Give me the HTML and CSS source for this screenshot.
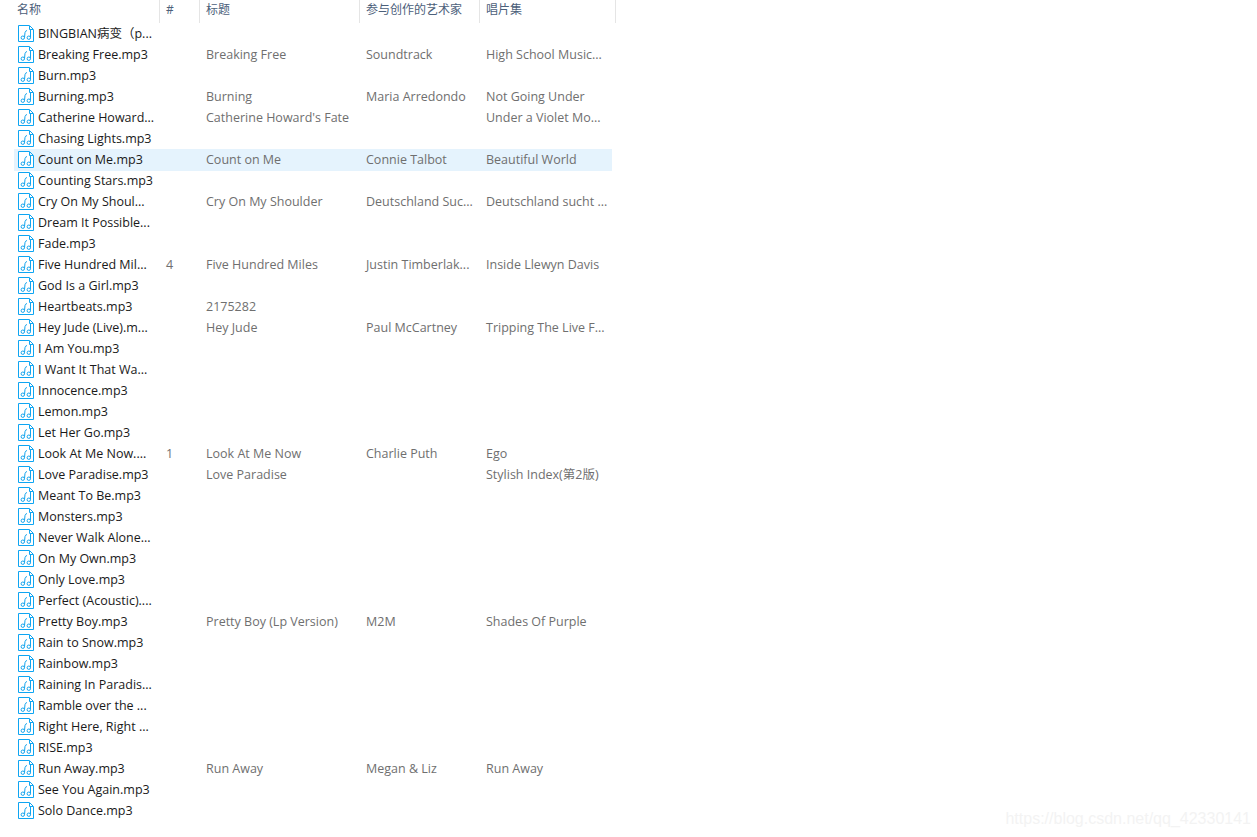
FILE: index.html
```html
<!DOCTYPE html>
<html>
  <head>
    <title>Music</title>
    <link rel="stylesheet" href="styles.css">
  </head>
  <body>
    <svg class="icon-defs" width="0" height="0">
      <symbol id="music-file" viewBox="0 0 17 17">
        <path d="M.5 .5H11.5L15.5 4.5V16.5H.5Z M11.5 1V4.5H15" fill="#fff" stroke="#0ea5f2"/>
        <path d="M6.5 12.5L7 7.5Q7.2 6 9 5.5M12.5 12.5V5" fill="none" stroke="#12a4ee"/>
        <circle cx="4.8" cy="12.7" r="1.7" fill="none" stroke="#12a4ee"/>
        <circle cx="10.8" cy="12.7" r="1.7" fill="none" stroke="#12a4ee"/>
      </symbol>
    </svg>
    <div class="list">
      <div class="head">
        <div class="th th-name">名称</div>
        <div class="th">#</div>
        <div class="th">标题</div>
        <div class="th">参与创作的艺术家</div>
        <div class="th">唱片集</div>
      </div>
      <div id="rows"></div>
    </div>
    <div class="mark">https://blog.csdn.net/qq_42330141</div>
    <script src="app.js"></script>
  </body>
</html>
```

FILE: styles.css
```css
html, body {
  margin: 0;
  padding: 0;
  height: 837px;
  overflow: hidden;
  background: #fff;
}
body {
  font-family: "Open Sans", "Noto Sans CJK SC", sans-serif;
  font-size: 12.5px;
  position: relative;
}
.icon-defs {
  position: absolute;
}
.list {
  width: 616px;
}
.head {
  display: grid;
  grid-template-columns: 160px 40px 160px 120px 136px;
  height: 23px;
}
.th {
  padding-left: 6px;
  font-size: 12px;
  line-height: 19px;
  color: #4c607a;
  border-right: 1px solid #e5e5e5;
  box-sizing: border-box;
}
.th-name {
  padding-left: 17px;
}
.row {
  display: grid;
  grid-template-columns: 147px 40px 160px 120px 131px;
  grid-template-rows: 21px;
  width: 598px;
  margin-left: 14px;
  height: 21px;
  line-height: 21px;
  color: #6f6f6f;
}
.row.selected {
  background: #e5f3fd;
  height: 22px;
  margin-bottom: -1px;
}
.cell {
  padding-left: 6px;
  white-space: nowrap;
  overflow: hidden;
}
.cell-name {
  padding-left: 4px;
  display: flex;
  align-items: center;
  gap: 3px;
  color: #1a1a1a;
}
.row > .cell:nth-child(2) {
  margin-left: -1px;
}
.row > .cell:nth-child(n+3) {
  margin-left: -1px;
  margin-right: -1px;
}
.icon {
  width: 17px;
  height: 17px;
  flex: none;
}
.mark {
  position: absolute;
  right: 6px;
  bottom: 9px;
  font-family: "Liberation Sans", sans-serif;
  font-size: 16px;
  color: #f3f3f3;
}
```

FILE: app.js
```js
var songs = [
  ["BINGBIAN病变（p...", "", "", "", ""],
  ["Breaking Free.mp3", "", "Breaking Free", "Soundtrack", "High School Music..."],
  ["Burn.mp3", "", "", "", ""],
  ["Burning.mp3", "", "Burning", "Maria Arredondo", "Not Going Under"],
  ["Catherine Howard...", "", "Catherine Howard's Fate", "", "Under a Violet Mo..."],
  ["Chasing Lights.mp3", "", "", "", ""],
  ["Count on Me.mp3", "", "Count on Me", "Connie Talbot", "Beautiful World"],
  ["Counting Stars.mp3", "", "", "", ""],
  ["Cry On My Shoul...", "", "Cry On My Shoulder", "Deutschland Suc...", "Deutschland sucht ..."],
  ["Dream It Possible...", "", "", "", ""],
  ["Fade.mp3", "", "", "", ""],
  ["Five Hundred Mil...", "4", "Five Hundred Miles", "Justin Timberlak...", "Inside Llewyn Davis"],
  ["God Is a Girl.mp3", "", "", "", ""],
  ["Heartbeats.mp3", "", "2175282", "", ""],
  ["Hey Jude (Live).m...", "", "Hey Jude", "Paul McCartney", "Tripping The Live F..."],
  ["I Am You.mp3", "", "", "", ""],
  ["I Want It That Wa...", "", "", "", ""],
  ["Innocence.mp3", "", "", "", ""],
  ["Lemon.mp3", "", "", "", ""],
  ["Let Her Go.mp3", "", "", "", ""],
  ["Look At Me Now....", "1", "Look At Me Now", "Charlie Puth", "Ego"],
  ["Love Paradise.mp3", "", "Love Paradise", "", "Stylish Index(第2版)"],
  ["Meant To Be.mp3", "", "", "", ""],
  ["Monsters.mp3", "", "", "", ""],
  ["Never Walk Alone...", "", "", "", ""],
  ["On My Own.mp3", "", "", "", ""],
  ["Only Love.mp3", "", "", "", ""],
  ["Perfect (Acoustic)....", "", "", "", ""],
  ["Pretty Boy.mp3", "", "Pretty Boy (Lp Version)", "M2M", "Shades Of Purple"],
  ["Rain to Snow.mp3", "", "", "", ""],
  ["Rainbow.mp3", "", "", "", ""],
  ["Raining In Paradis...", "", "", "", ""],
  ["Ramble over the ...", "", "", "", ""],
  ["Right Here, Right ...", "", "", "", ""],
  ["RISE.mp3", "", "", "", ""],
  ["Run Away.mp3", "", "Run Away", "Megan & Liz", "Run Away"],
  ["See You Again.mp3", "", "", "", ""],
  ["Solo Dance.mp3", "", "", "", ""]
];

var rows = document.getElementById("rows");
songs.forEach(function(song, i) {
  var row = document.createElement("div");
  row.className = i === 6 ? "row selected" : "row";
  song.forEach(function(text, col) {
    var cell = document.createElement("div");
    cell.className = col === 0 ? "cell cell-name" : "cell";
    if (col === 0) {
      cell.innerHTML = '<svg class="icon"><use href="#music-file"/></svg>';
      cell.appendChild(document.createTextNode(text));
    } else {
      cell.textContent = text;
    }
    row.appendChild(cell);
  });
  rows.appendChild(row);
});
```
